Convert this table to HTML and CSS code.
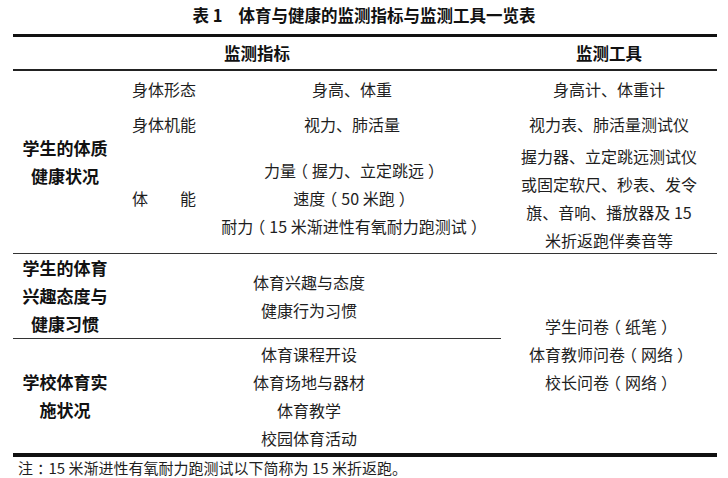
FILE: index.html
```html
<!DOCTYPE html>
<html lang="zh-CN">
<head>
<meta charset="utf-8">
<title>表1 体育与健康的监测指标与监测工具一览表</title>
<link rel="stylesheet" href="styles.css">
</head>
<body>
<div class="title"><span class="tnum">表 1</span>体育与健康的监测指标与监测工具一览表</div>
<div class="tbl">
  <div class="cell head span3">监测指标</div>
  <div class="cell head">监测工具</div>

  <div class="cell lab s1 line">学生的体质<br>健康状况</div>
  <div class="cell sub">身体形态</div>
  <div class="cell mid">身高、体重</div>
  <div class="cell tool">身高计、体重计</div>

  <div class="cell sub">身体机能</div>
  <div class="cell mid">视力、肺活量</div>
  <div class="cell tool">视力表、肺活量测试仪</div>

  <div class="cell sub line"><span class="just"><span>体</span><span>能</span></span></div>
  <div class="cell mid line">
    <span>力量<span class="pu">（</span>握力、立定跳远<span class="pu">）</span></span>
    <span>速度<span class="pu">（</span>50 米跑<span class="pu">）</span></span>
    <span>耐力<span class="pu">（</span>15 米渐进性有氧耐力跑测试<span class="pu">）</span></span>
  </div>
  <div class="cell tool line">
    <span>握力器、立定跳远测试仪</span>
    <span>或固定软尺、秒表、发令</span>
    <span>旗、音响、播放器及 15</span>
    <span>米折返跑伴奏音等</span>
  </div>

  <div class="cell lab line">学生的体育<br>兴趣态度与<br>健康习惯</div>
  <div class="cell mid span2 line">体育兴趣与态度<br>健康行为习惯</div>
  <div class="cell tool s2">
    <span>学生问卷<span class="pu">（</span>纸笔<span class="pu">）</span></span>
    <span>体育教师问卷<span class="pu">（</span>网络<span class="pu">）</span></span>
    <span>校长问卷<span class="pu">（</span>网络<span class="pu">）</span></span>
  </div>

  <div class="cell lab">学校体育实<br>施状况</div>
  <div class="cell mid span2">体育课程开设<br>体育场地与器材<br>体育教学<br>校园体育活动</div>
</div>
<div class="note">注<span class="pu">：</span>15 米渐进性有氧耐力跑测试以下简称为 15 米折返跑。</div>
</body>
</html>
```
FILE: styles.css
```css
html, body {
  margin: 0;
  padding: 0;
  background: #fff;
}
body {
  width: 728px;
  height: 478px;
  overflow: hidden;
  font-family: "Noto Sans CJK SC", "Microsoft YaHei", sans-serif;
  color: #1e1e1e;
  font-size: 16px;
}
.title {
  height: 34px;
  line-height: 30px;
  text-align: center;
  font-weight: 700;
  font-size: 16.5px;
  color: #111;
}
.tnum {
  margin-right: 16px;
}
.tbl {
  margin: 0 11px 0 13px;
  display: grid;
  grid-template-columns: 104px 86px 298px 216px;
  grid-template-rows: 34px 35px 36px 112px 85px 114px;
  border-top: 3px solid #111;
  border-bottom: 4px solid #111;
}
.cell {
  display: flex;
  flex-direction: column;
  justify-content: center;
  align-items: center;
  text-align: center;
  line-height: 28px;
}
.head {
  font-weight: 700;
  font-size: 16.5px;
  color: #111;
  border-bottom: 2px solid #222;
}
.span3 { grid-column: span 3; }
.span2 { grid-column: span 2; }
.s1 { grid-row: span 3; }
.s2 { grid-row: span 2; }
.line { border-bottom: 1px solid #333; }
.lab {
  font-weight: 700;
  font-size: 17px;
  color: #111;
}
.sub {
  align-items: flex-start;
  padding-left: 15px;
}
.just {
  display: flex;
  justify-content: space-between;
  width: 64px;
}
.pu {
  font-feature-settings: "halt";
  padding: 0 4px;
}
.note {
  padding-left: 18px;
  line-height: 22px;
  font-size: 15px;
}
```
